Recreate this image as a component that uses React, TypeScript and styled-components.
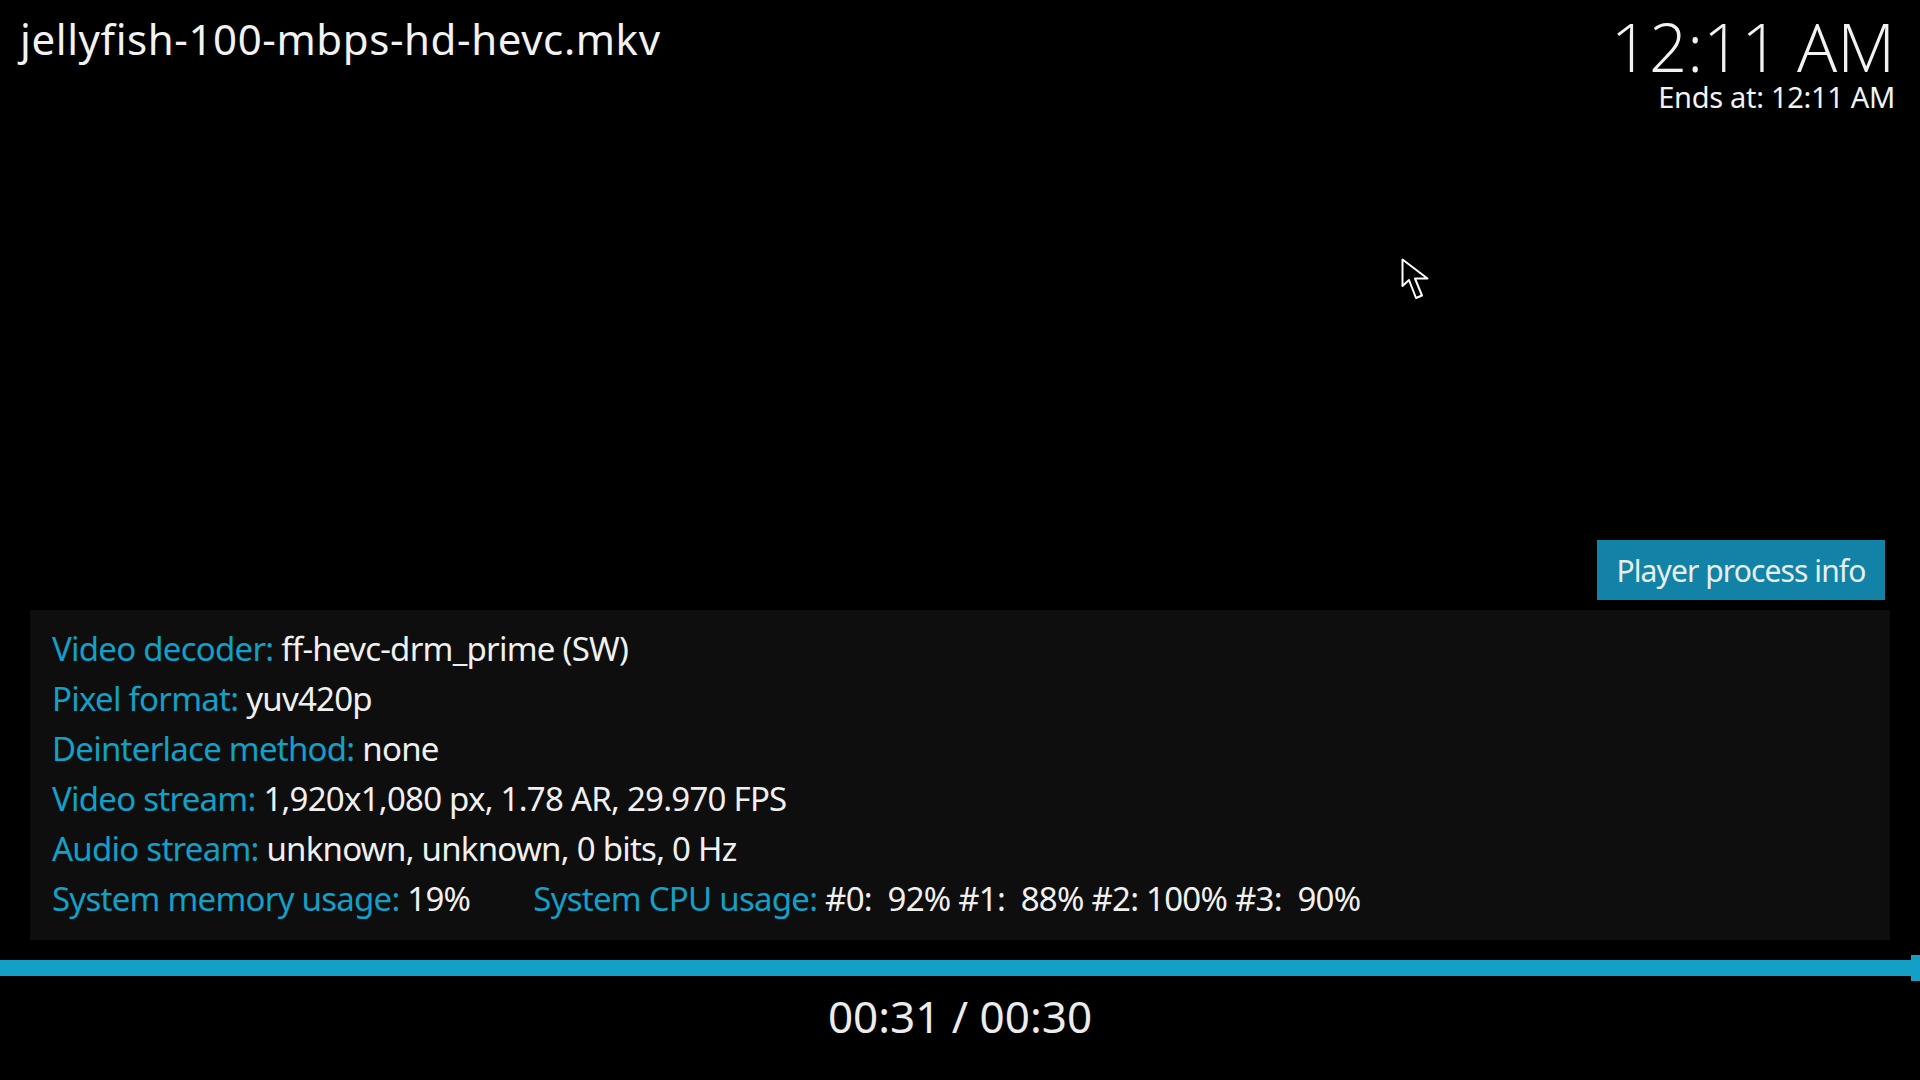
import styled, { createGlobalStyle } from "styled-components"

const GlobalStyle = createGlobalStyle`
  html, body {
    margin: 0;
    padding: 0;
    background: #000;
  }
  body {
    font-family: "Noto Sans", "Open Sans", sans-serif;
  }
`

const Screen = styled.div`
  position: relative;
  display: flex;
  flex-direction: column;
  width: 1920px;
  height: 1080px;
  background: #000;
  color: #f0f0f0;
  overflow: hidden;
`

const Header = styled.div`
  display: flex;
  justify-content: space-between;
  align-items: flex-start;
  padding: 11px 25px 0 20px;
`

const Title = styled.h1`
  margin: 0;
  font-size: 42px;
  font-weight: 400;
  line-height: 56px;
  letter-spacing: 0.6px;
  color: #f2f2f2;
`

const Clock = styled.div`
  display: flex;
  flex-direction: column;
  align-items: flex-end;
  padding-top: 4px;
`

const Time = styled.div`
  font-family: "Noto Sans Light", "Open Sans Light", "Open Sans", "Noto Sans", sans-serif;
  font-size: 67px;
  font-weight: 300;
  line-height: 62px;
  color: #f2f2f2;
`

const EndsAt = styled.div`
  margin-top: 5px;
  font-size: 29px;
  line-height: 29px;
  letter-spacing: -0.3px;
  color: #f2f2f2;
`

const Spacer = styled.div`
  flex: 1;
`

const ButtonRow = styled.div`
  display: flex;
  justify-content: flex-end;
  padding-right: 35px;
  margin-bottom: 10px;
`

const InfoButton = styled.button`
  height: 60px;
  width: 288px;
  border: none;
  background: #1283a6;
  color: #e8eef0;
  font-family: "Noto Sans", "Open Sans", sans-serif;
  font-size: 30px;
  letter-spacing: -0.9px;
  white-space: nowrap;
  padding: 0;
  cursor: pointer;
`

const Panel = styled.div`
  display: flex;
  flex-direction: column;
  margin: 0 30px;
  height: 330px;
  box-sizing: border-box;
  padding: 14px 22px 16px;
  background: #0e0e0e;
`

const Row = styled.div`
  display: flex;
  font-size: 33px;
  line-height: 50px;
  letter-spacing: -0.75px;
  white-space: pre;
`

const Field = styled.span<{ $gap?: number }>`
  margin-right: ${({ $gap }) => ($gap ? `${$gap}px` : "0")};
`

const Label = styled.span`
  color: #12a0c8;
`

const Value = styled.span`
  color: #f0f0f0;
`

const Progress = styled.div`
  position: relative;
  margin-top: 20px;
  height: 16px;
  background: #14a0c6;
`

const Nub = styled.div`
  position: absolute;
  right: 0;
  top: -5px;
  width: 9px;
  height: 26px;
  background: #14a0c6;
`

const Elapsed = styled.div`
  margin-top: 10px;
  padding-bottom: 34px;
  text-align: center;
  font-size: 44px;
  line-height: 60px;
  color: #ececec;
`

const Pointer = styled.svg`
  position: absolute;
  left: 1401px;
  top: 258px;
`

const rows: { label: string; value: string }[][] = [
  [{ label: "Video decoder:", value: "ff-hevc-drm_prime (SW)" }],
  [{ label: "Pixel format:", value: "yuv420p" }],
  [{ label: "Deinterlace method:", value: "none" }],
  [{ label: "Video stream:", value: "1,920x1,080 px, 1.78 AR, 29.970 FPS" }],
  [{ label: "Audio stream:", value: "unknown, unknown, 0 bits, 0 Hz" }],
  [
    { label: "System memory usage:", value: "19%" },
    { label: "System CPU usage:", value: "#0:  92% #1:  88% #2: 100% #3:  90%" },
  ],
]

export default function App() {
  return (
    <Screen>
      <GlobalStyle />
      <Header>
        <Title>jellyfish-100-mbps-hd-hevc.mkv</Title>
        <Clock>
          <Time>12:11 AM</Time>
          <EndsAt>Ends at: 12:11 AM</EndsAt>
        </Clock>
      </Header>
      <Spacer />
      <ButtonRow>
        <InfoButton>Player process info</InfoButton>
      </ButtonRow>
      <Panel>
        {rows.map((fields, i) => (
          <Row key={i}>
            {fields.map((f, j) => (
              <Field key={j} $gap={j < fields.length - 1 ? 63 : 0}>
                <Label>{f.label} </Label>
                <Value>{f.value}</Value>
              </Field>
            ))}
          </Row>
        ))}
      </Panel>
      <Progress>
        <Nub />
      </Progress>
      <Elapsed>00:31 / 00:30</Elapsed>
      <Pointer width="30" height="46" viewBox="0 0 30 46">
        <path
          d="M1.5 1.5 L1.5 28 L8 22 L15 40 L21 37.5 L14 20.5 L26.5 20.5 Z"
          fill="#000"
          stroke="#fff"
          strokeWidth="2"
          strokeLinejoin="round"
        />
      </Pointer>
    </Screen>
  )
}
